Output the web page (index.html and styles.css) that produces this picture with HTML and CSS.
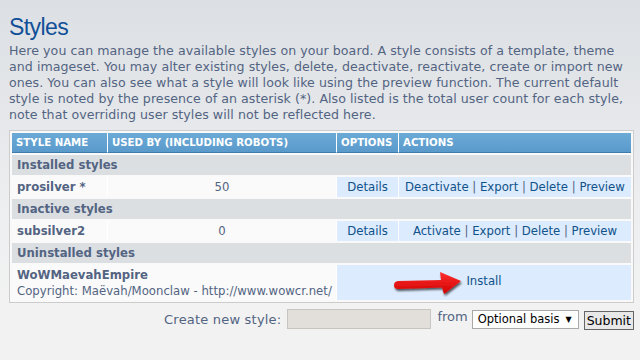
FILE: index.html
```html
<!DOCTYPE html>
<html>
<head>
<meta charset="utf-8">
<link rel="stylesheet" href="styles.css">
</head>
<body>
<div class="page">
  <h1 class="title">Styles</h1>
  <p class="intro">Here you can manage the available styles on your board. A style consists of a template, theme and imageset. You may alter existing styles, delete, deactivate, reactivate, create or import new ones. You can also see what a style will look like using the preview function. The current default style is noted by the presence of an asterisk (*). Also listed is the total user count for each style, note that overriding user styles will not be reflected here.</p>
  <div class="panel">
    <table class="grid">
      <colgroup>
        <col class="c1"><col class="c2"><col class="c3"><col class="c4">
      </colgroup>
      <thead>
        <tr><th>Style name</th><th>Used by (including robots)</th><th>Options</th><th>Actions</th></tr>
      </thead>
      <tbody>
        <tr class="sec"><td colspan="4">Installed styles</td></tr>
        <tr class="row">
          <td class="name">prosilver *</td>
          <td class="num">50</td>
          <td class="opt"><a>Details</a></td>
          <td class="act"><a>Deactivate</a> | <a>Export</a> | <a>Delete</a> | <a>Preview</a></td>
        </tr>
        <tr class="sec"><td colspan="4">Inactive styles</td></tr>
        <tr class="row">
          <td class="name">subsilver2</td>
          <td class="num">0</td>
          <td class="opt"><a>Details</a></td>
          <td class="act"><a>Activate</a> | <a>Export</a> | <a>Delete</a> | <a>Preview</a></td>
        </tr>
        <tr class="sec"><td colspan="4">Uninstalled styles</td></tr>
        <tr class="row">
          <td class="name tall" colspan="2"><strong>WoWMaevahEmpire</strong><br><span class="copy">Copyright: Maëvah/Moonclaw - http://www.wowcr.net/</span></td>
          <td class="inst" colspan="2">
            <svg class="arrow" width="76" height="28" viewBox="0 0 76 28">
              <defs>
                <filter id="sh" x="-20%" y="-40%" width="140%" height="180%">
                  <feGaussianBlur in="SourceAlpha" stdDeviation="1.3"/>
                  <feOffset dx="1" dy="2"/>
                  <feComponentTransfer><feFuncA type="linear" slope="0.65"/></feComponentTransfer>
                  <feMerge><feMergeNode/><feMergeNode in="SourceGraphic"/></feMerge>
                </filter>
                <linearGradient id="rg" x1="0" y1="0" x2="0" y2="1">
                  <stop offset="0" stop-color="#ff3030"/>
                  <stop offset="1" stop-color="#d00000"/>
                </linearGradient>
              </defs>
              <path filter="url(#sh)" fill="url(#rg)" d="M6 12 Q2 12.5 2 16 Q2 20 6 20 L50 18.5 L52 25 L69 12 L48 3 L49 11 Z"/>
            </svg>
            <a>Install</a>
          </td>
        </tr>
      </tbody>
    </table>
  </div>
  <div class="create">
    <label class="lbl">Create new style:</label>
    <span class="field"></span>
    <span class="from">from</span>
    <span class="select">Optional basis <span class="tri">▼</span></span>
    <span class="btn">Submit</span>
  </div>
</div>
</body>
</html>
```

FILE: styles.css
```css
html, body {
  margin: 0;
  padding: 0;
}
body {
  width: 640px;
  height: 360px;
  overflow: hidden;
  background: linear-gradient(to bottom, #dcdfe3 0px, #eceef0 200px, #f2f2f2 300px, #f2f2f2 360px);
  font-family: Verdana, "DejaVu Sans", sans-serif;
  color: #536482;
}
.page {
  padding: 12px 6px 0 9px;
}
.title {
  margin: 0;
  font-size: 23px;
  font-weight: normal;
  color: #115098;
  line-height: 30px;
  letter-spacing: -0.6px;
  font-family: "Liberation Sans", Arial, sans-serif;
}
.intro {
  margin: 1px 0 0 0;
  font-size: 12.6px;
  line-height: 16px;
  color: #536482;
  letter-spacing: 0.05px;
}
.panel {
  margin-top: 7px;
  border: 1px solid #cccccc;
  background: #f9f9f9;
  padding: 2px;
  width: 619px;
}
.grid {
  width: 619px;
  border-collapse: separate;
  border-spacing: 0;
  table-layout: fixed;
  font-size: 11.7px;
}
.c1 { width: 95px; }
.c2 { width: 229px; }
.c3 { width: 62px; }
.c4 { width: 233px; }
.grid th {
  background: linear-gradient(to bottom, #6caad6 0%, #5a9acb 100%);
  border-bottom: 1px solid #3f7cac;
  border-left: 1px solid #ffffff;
  color: #ffffff;
  font-weight: bold;
  text-transform: uppercase;
  text-align: left;
  font-size: 10.2px;
  height: 19px;
  padding: 0 4px;
  white-space: nowrap;
  overflow: hidden;
}
.grid th:first-child { border-left: none; }
.grid td {
  padding: 0 5px;
  height: 20px;
  border-top: 2px solid #f9f9f9;
  white-space: nowrap;
}
.sec td {
  background: #dcdfe2;
  font-weight: bold;
  color: #536482;
}
.row td {
  background: #fafafa;
}
.row td + td { border-left: 1px solid #ffffff; }
.name { font-weight: bold; }
.num { text-align: center; color: #536482; }
.opt, .act, .inst {
  background: #dcebfe !important;
  text-align: center;
}
.row .opt { padding: 0 2px; }
.act { color: #536482; }
a { color: #105289; }
.copy { font-weight: normal; }
.row td.tall {
  height: 34px;
  line-height: 16px;
  padding-top: 1px;
}
.inst { position: relative; }
.inst a { position: relative; top: -2px; }
.arrow {
  position: absolute;
  left: 55px;
  top: 4px;
}
.create {
  display: flex;
  align-items: center;
  justify-content: flex-end;
  margin-top: 5px;
  font-size: 13px;
  height: 22px;
}
.lbl { margin-right: 6px; color: #536482; letter-spacing: 0.2px; }
.field {
  width: 142px;
  height: 18px;
  background: #e2dfda;
  border: 1px solid #c8c5c0;
  margin-right: 6px;
}
.from { color: #536482; margin-right: 4px; position: relative; top: -3px; }
.select {
  width: 100px;
  height: 17px;
  border: 1px solid #a9a9a9;
  background: #fff;
  color: #000;
  font-size: 11.5px;
  padding-left: 5px;
  white-space: nowrap;
  display: flex;
  align-items: center;
  justify-content: space-between;
  margin-right: 5px;
}
.tri { font-size: 8px; margin-right: 6px; }
.btn {
  border: 1px solid #666;
  background: #e8e8e8;
  color: #000;
  font-size: 12.5px;
  padding: 0 2px;
  height: 17px;
  line-height: 17px;
  margin-top: 3px;
}
```
